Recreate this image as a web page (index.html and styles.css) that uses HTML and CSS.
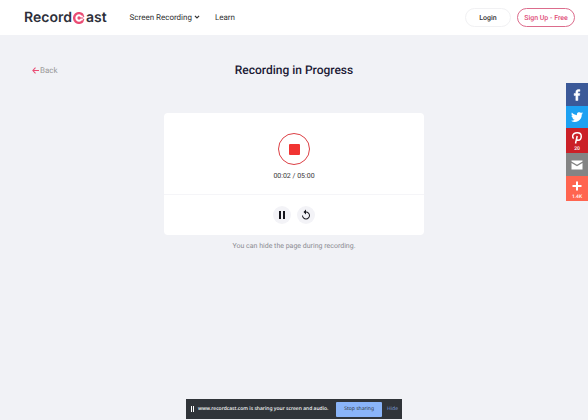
FILE: index.html
```
<!DOCTYPE html>
<html lang="en">
	<head>
		<title>RecordCast - Recording in Progress</title>
		<meta charset="utf-8">
		<meta name="viewport" content="width=device-width, initial-scale=1.0">
		<link rel="stylesheet" href="styles.css">
	</head>
	<body>
		<header class="header">
			<a class="logo" href="#" aria-label="RecordCast">
				<span>Record</span>
				<svg class="logo-mark" viewBox="0 0 22 22">
					<path d="M18 5.500A8.900 8.900 0 1 0 18 16.500" fill="none" stroke="#ea4c74" stroke-width="4.400"/>
					<path d="M15.500 3.300A8.900 8.900 0 0 1 19.700 9M15.500 18.700A8.900 8.900 0 0 0 19.700 13" fill="none" stroke="#ea4c74" stroke-width="2.500"/>
					<circle cx="11" cy="11" r="3" fill="#ea4c74"/>
					<path d="M11 11h8" fill="none" stroke="#ea4c74" stroke-width="2"/>
				</svg>
				<span>ast</span>
			</a>
			<nav class="nav">
				<a href="#">Screen Recording
					<svg class="chevron" viewBox="0 0 10 10"><path d="M1.5 3l3.5 3.5L8.500 3" fill="none" stroke="currentColor" stroke-width="2"/></svg>
				</a>
				<a href="#">Learn</a>
			</nav>
			<button class="btn" type="button">Login</button>
			<button class="btn btn-signup" type="button">Sign Up - Free</button>
		</header>

		<main class="main">
			<div class="title-row">
				<a class="back" href="#">
					<svg viewBox="0 0 16 16"><path d="M16 8H2M8 1.500L2 8l6 6.500" fill="none" stroke="#ea4c74" stroke-width="2.400"/></svg>
					Back
				</a>
				<h1>Recording in Progress</h1>
			</div>
			<section class="card">
				<div class="card-top">
					<button class="stop" type="button" aria-label="Stop recording"><span></span></button>
					<div class="time">00:02 / 05:00</div>
				</div>
				<div class="card-bottom">
					<button class="round" type="button" aria-label="Pause">
						<svg viewBox="0 0 24 24"><path d="M6 4h4v16H6zM14 4h4v16h-4z"/></svg>
					</button>
					<button class="round" type="button" aria-label="Restart">
						<svg viewBox="0 0 24 24"><path d="M12 5V1L7 6l5 5V7c3.310 0 6 2.690 6 6s-2.690 6-6 6-6-2.690-6-6H4c0 4.420 3.580 8 8 8s8-3.580 8-8-3.580-8-8-8z"/></svg>
					</button>
				</div>
			</section>
			<p class="hint">You can hide the page during recording.</p>
		</main>

		<div class="share">
			<a class="facebook" href="#" aria-label="Facebook">
				<svg viewBox="0 0 32 32"><path d="M17.800 27V17h3.300l.5-4h-3.800v-2.400c0-1.200.3-1.900 1.900-1.900h2.100V5.200C21.400 5.100 20.200 5 18.800 5c-3 0-5.100 1.800-5.100 5.200V13h-3.400v4h3.400v10z" stroke="#fff"/></svg>
			</a>
			<a class="twitter" href="#" aria-label="Twitter">
				<svg viewBox="0 0 32 32"><path d="M28 8.600a10 10 0 0 1-2.800.8 5 5 0 0 0 2.100-2.700c-1 .5-2 1-3.100 1.200a4.900 4.900 0 0 0-8.500 3.300c0 .4 0 .8.100 1.100-4-.2-7.700-2.100-10.100-5.100a4.900 4.900 0 0 0 1.500 6.600c-.8 0-1.500-.2-2.200-.6v.1c0 2.300 1.700 4.400 3.900 4.800a5 5 0 0 1-2.200.1 4.900 4.900 0 0 0 4.600 3.400A9.900 9.900 0 0 1 4 23.600 14 14 0 0 0 25.500 11.200c1-.7 1.800-1.600 2.500-2.600z"/></svg>
			</a>
			<a class="pinterest tall" href="#" aria-label="Pinterest">
				<svg viewBox="0 0 32 32"><path d="M9.200 17.200C7.600 15.700 7 14 7.300 11.900 7.900 8 11.800 5.600 16.500 5.600c4.700 0 8 3.100 8 7.100 0 4.600-2.700 7.900-6.300 7.900-1.700 0-3-1-3.300-2.100M16.400 12l-3.400 15" fill="none" stroke="#fff" stroke-width="3"/></svg>
				<span>20</span>
			</a>
			<a class="email" href="#" aria-label="Email">
				<svg viewBox="0 0 32 32"><path d="M5 7h22v2l-11 6.500L5 9zM5 12l11 6.500L27 12v13H5z"/></svg>
			</a>
			<a class="more tall" href="#" aria-label="More">
				<svg viewBox="0 0 32 32"><path d="M14 7h4v7h7v4h-7v7h-4v-7H7v-4h7z"/></svg>
				<span>1.4K</span>
			</a>
		</div>

		<div class="sharing">
			<svg viewBox="0 0 5 8"><path d="M1 1h1v6H1zM3 1h1v6H3z"/></svg>
			<span class="sharing-text">www.recordcast.com is sharing your screen and audio.</span>
			<button class="stop-sharing" type="button">Stop sharing</button>
			<button class="hide" type="button">Hide</button>
		</div>
	</body>
</html>
```
FILE: styles.css
```
* {
	box-sizing: border-box;
}
body {
	margin: 0;
	background-color: #f1f2f6;
	font-family: Roboto, "Liberation Sans", sans-serif;
	font-size: 8px;
	color: #333;
	text-rendering: geometricPrecision;
}
a {
	color: inherit;
	text-decoration: none;
}
svg {
	flex-shrink: 0;
}
button {
	font-family: inherit;
	text-rendering: inherit;
	cursor: pointer;
	padding: 0;
	border: none;
}

.header {
	display: flex;
	align-items: center;
	height: 35px;
	padding: 0 13px 0 24px;
	background-color: #fff;
}
.logo {
	display: flex;
	align-items: center;
	gap: 1px;
	font-family: Inter, sans-serif;
	font-size: 14px;
	font-weight: 600;
	line-height: 16px;
	color: #2d2f3a;
}
.logo-mark {
	width: 12px;
	height: 12px;
}
.nav {
	display: flex;
	flex: 1;
	gap: 15px;
	margin-left: 23px;
	font-size: 8px;
}
.chevron {
	width: 6px;
	height: 6px;
}
.btn {
	width: 46px;
	height: 19px;
	border: 1px solid #f1f1f3;
	border-radius: 10px;
	background-color: #fff;
	font-size: 7px;
	font-weight: 500;
	color: #333;
}
.btn-signup {
	width: 58px;
	margin-left: 6px;
	border-color: #dc6c8c;
	color: #e0507a;
}

.main {
	padding: 26px 32px;
}
.title-row {
	display: grid;
	grid-template-columns: 1fr auto 1fr;
	align-items: center;
}
.title-row h1 {
	margin: 0;
	font-size: 12px;
	font-weight: 500;
	line-height: 18px;
	color: #1c1a35;
}
.back {
	display: flex;
	align-items: center;
	gap: 1px;
	color: #999;
}
.back svg {
	width: 7px;
	height: 7px;
}
.card {
	max-width: 260px;
	margin: 34px auto 0;
	border-radius: 4px;
	background-color: #fff;
}
.card-top {
	display: flex;
	flex-direction: column;
	align-items: center;
	gap: 6px;
	padding: 20px 0 13px;
	border-bottom: 1px solid #f5f5f8;
}
.stop {
	display: flex;
	align-items: center;
	justify-content: center;
	width: 32px;
	height: 32px;
	border: 1px solid #dc4045;
	border-radius: 50%;
	background-color: #fff;
}
.stop span {
	width: 11px;
	height: 11px;
	border-radius: 1px;
	background-color: #f13432;
}
.time {
	font-size: 7px;
	line-height: 10px;
}
.card-bottom {
	display: flex;
	justify-content: center;
	gap: 6px;
	padding: 11px 0;
}
.round {
	display: flex;
	align-items: center;
	justify-content: center;
	width: 18px;
	height: 18px;
	border-radius: 50%;
	background-color: #f3f3f7;
}
.round svg {
	width: 12px;
	height: 12px;
	fill: #15151c;
}
.hint {
	margin: 6px 0 0;
	font-size: 7px;
	line-height: 10px;
	text-align: center;
	color: #8b8b92;
}

/* social buttons on the right edge */
.share {
	position: fixed;
	top: 83px;
	right: 0;
	width: 22px;
}
.share a {
	display: flex;
	flex-direction: column;
	align-items: center;
	justify-content: center;
	height: 23px;
	font-size: 5px;
	font-weight: 500;
	line-height: 6px;
	color: #fff;
}
.share .tall {
	height: 25px;
}
.share svg {
	width: 16px;
	height: 16px;
	fill: #fff;
}
.share .twitter {
	height: 22px;
}
.facebook { background-color: #3b5998; }
.twitter { background-color: #1da1f2; }
.pinterest { background-color: #cb2027; }
.email { background-color: #848484; }
.more { background-color: #ff6550; }

/* browser screen sharing bar */
.sharing {
	position: fixed;
	bottom: 1px;
	left: 50%;
	transform: translateX(-50%);
	display: flex;
	align-items: center;
	width: 216px;
	height: 20px;
	padding: 0 4px;
	background-color: #303439;
	font-family: "Noto Sans", sans-serif;
	font-size: 5px;
	font-weight: 500;
	color: #fff;
	white-space: nowrap;
}
.sharing svg {
	width: 5px;
	height: 8px;
	margin-right: 3px;
	fill: #fff;
}
.sharing-text {
	flex: 1;
}
.stop-sharing {
	flex-shrink: 0;
	width: 46px;
	height: 15px;
	border-radius: 1px;
	background-color: #8ab4f8;
	font-size: 5px;
	color: #303439;
}
.hide {
	margin-left: 5px;
	background: none;
	font-size: 5px;
	color: #7f9fdc;
}
```
